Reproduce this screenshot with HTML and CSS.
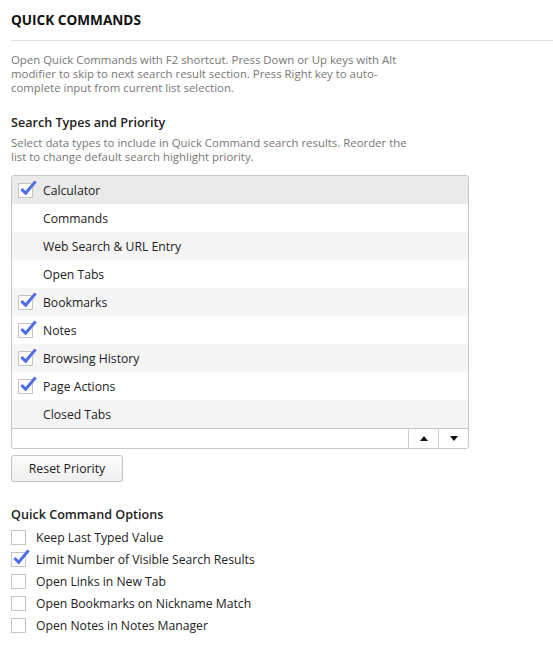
FILE: index.html
```html
<!DOCTYPE html>
<html>
<head>
<meta charset="utf-8">
<link rel="stylesheet" href="styles.css">
</head>
<body>
<div class="page">
  <h1 class="title">QUICK COMMANDS</h1>
  <div class="rule"></div>
  <p class="desc">Open Quick Commands with F2 shortcut. Press Down or Up keys with Alt modifier to skip to next search result section. Press Right key to auto-complete input from current list selection.</p>

  <h2 class="heading">Search Types and Priority</h2>
  <p class="desc narrow">Select data types to include in Quick Command search results. Reorder the list to change default search highlight priority.</p>

  <div class="listbox">
    <div class="row selected"><span class="cb checked"><svg class="tick" viewBox="0 0 20 20"><path d="M2.5 10.5 L7 15 L17.5 2.5"/></svg></span><span>Calculator</span></div>
    <div class="row"><span class="cb"></span><span>Commands</span></div>
    <div class="row alt"><span class="cb"></span><span>Web Search &amp; URL Entry</span></div>
    <div class="row"><span class="cb"></span><span>Open Tabs</span></div>
    <div class="row alt"><span class="cb checked"><svg class="tick" viewBox="0 0 20 20"><path d="M2.5 10.5 L7 15 L17.5 2.5"/></svg></span><span>Bookmarks</span></div>
    <div class="row"><span class="cb checked"><svg class="tick" viewBox="0 0 20 20"><path d="M2.5 10.5 L7 15 L17.5 2.5"/></svg></span><span>Notes</span></div>
    <div class="row alt"><span class="cb checked"><svg class="tick" viewBox="0 0 20 20"><path d="M2.5 10.5 L7 15 L17.5 2.5"/></svg></span><span>Browsing History</span></div>
    <div class="row"><span class="cb checked"><svg class="tick" viewBox="0 0 20 20"><path d="M2.5 10.5 L7 15 L17.5 2.5"/></svg></span><span>Page Actions</span></div>
    <div class="row alt"><span class="cb"></span><span>Closed Tabs</span></div>
    <div class="footer">
      <div class="spacer"></div>
      <div class="arrow"><svg viewBox="0 0 10 6" class="tri"><path d="M0 6 L5 0 L10 6 Z"/></svg></div>
      <div class="arrow"><svg viewBox="0 0 10 6" class="tri"><path d="M0 0 L10 0 L5 6 Z"/></svg></div>
    </div>
  </div>

  <button class="btn">Reset Priority</button>

  <h2 class="heading opts-heading">Quick Command Options</h2>
  <div class="options">
    <label class="opt"><span class="box"></span>Keep Last Typed Value</label>
    <label class="opt"><span class="box"><svg class="tick" viewBox="0 0 20 20"><path d="M2.5 10.5 L7 15 L17.5 2.5"/></svg></span>Limit Number of Visible Search Results</label>
    <label class="opt"><span class="box"></span>Open Links in New Tab</label>
    <label class="opt"><span class="box"></span>Open Bookmarks on Nickname Match</label>
    <label class="opt"><span class="box"></span>Open Notes in Notes Manager</label>
  </div>
</div>
</body>
</html>
```
FILE: styles.css
```css
html, body { margin: 0; padding: 0; background: #fff; }
body {
  font-family: "Open Sans", "Noto Sans", sans-serif;
  font-size: 12px;
  color: #222;
}
.page { padding: 0 0 0 11px; }
.title {
  margin: 0;
  padding-top: 11px;
  font-size: 13.6px;
  font-weight: 700;
  line-height: 18px;
  color: #111;
}
.rule {
  height: 1px;
  background: #e2e2e2;
  margin-top: 11px;
}
.desc {
  margin: 12px 0 0;
  font-size: 11.4px;
  line-height: 14px;
  color: #777;
  width: 402px;
}
.desc.narrow { margin-top: 4px; }
.heading {
  margin: 19px 0 0;
  font-size: 12.6px;
  font-weight: 600;
  line-height: 18px;
  color: #222;
}
.listbox {
  margin-top: 11px;
  width: 456px;
  border: 1px solid #c8c8c8;
  border-radius: 3px;
  overflow: hidden;
}
.row {
  height: 28px;
  display: flex;
  align-items: center;
  font-size: 12.2px;
  color: #222;
  background: #fff;
}
.row.alt { background: #f5f5f5; }
.row.selected { background: #eaeaea; }
.cb {
  width: 15px; height: 15px;
  margin: 0 10px 0 6px;
  box-sizing: border-box;
  position: relative;
  flex: none;
}
.cb.checked, .box {
  border: 1px solid #c4c4c4;
  background: #fff;
}
.tick {
  position: absolute;
  left: 0; top: -5px;
  width: 19px; height: 19px;
  overflow: visible;
}
.tick path {
  fill: none;
  stroke: #4d6ee8;
  stroke-width: 3.2;
  stroke-linecap: butt;
  stroke-linejoin: miter;
}
.footer {
  height: 19px;
  display: flex;
  border-top: 1px solid #c8c8c8;
  background: #fff;
}
.spacer { flex: 1; }
.arrow {
  width: 29px;
  border-left: 1px solid #d0d0d0;
  display: flex;
  align-items: center;
  justify-content: center;
}
.tri { width: 8px; height: 5px; fill: #111; }
.btn {
  display: block;
  margin-top: 6px;
  width: 112px;
  height: 27px;
  font-family: "Open Sans", "Noto Sans", sans-serif;
  font-size: 12.3px;
  color: #222;
  background: linear-gradient(#fbfbfb, #f0f0f0);
  border: 1px solid #c4c4c4;
  border-radius: 3px;
  padding: 0;
}
.opts-heading { margin-top: 24px; }
.options { margin-top: 2px; display: flex; flex-direction: column; }
.opt {
  display: flex;
  align-items: center;
  height: 22px;
  font-size: 12.2px;
  color: #222;
}
.box {
  width: 15px; height: 15px;
  box-sizing: border-box;
  margin-right: 10px;
  position: relative;
  flex: none;
}
```
